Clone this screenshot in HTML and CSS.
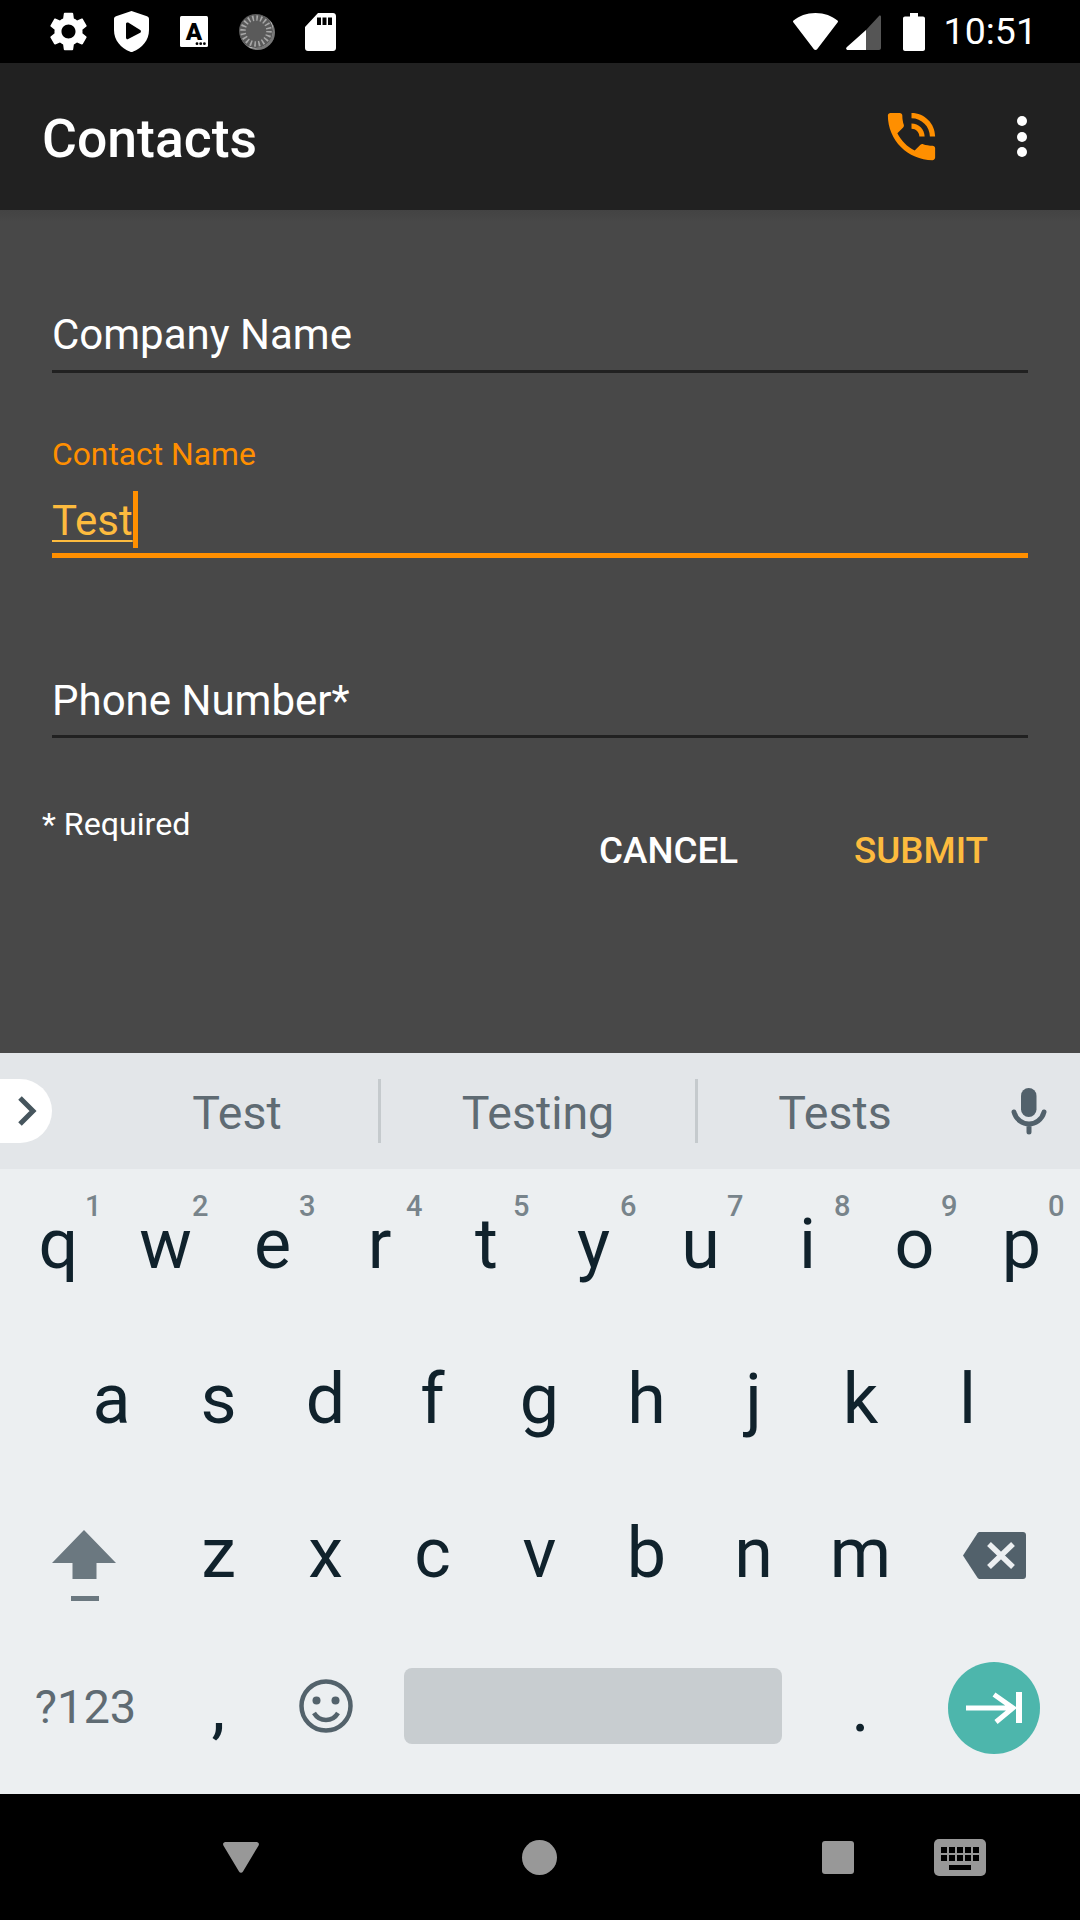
FILE: index.html
```html
<!DOCTYPE html>
<html lang="en">
<head>
<meta charset="utf-8">
<title>Contacts</title>
<link rel="stylesheet" href="styles.css">
</head>
<body>
<div class="screen">
  <header class="status">
    <div class="status-left">
      <svg class="i-gear" viewBox="2.5 2 19 20"><path fill="#fff" d="M19.14 12.94c.04-.3.06-.61.06-.94 0-.32-.02-.64-.07-.94l2.03-1.58c.18-.14.23-.41.12-.61l-1.92-3.32c-.12-.22-.37-.29-.59-.22l-2.39.96c-.5-.38-1.03-.7-1.62-.94l-.36-2.54c-.04-.24-.24-.41-.48-.41h-3.84c-.24 0-.43.17-.47.41l-.36 2.54c-.59.24-1.13.57-1.62.94l-2.39-.96c-.22-.08-.47 0-.59.22L2.74 8.87c-.12.21-.08.47.12.61l2.03 1.58c-.05.3-.09.63-.09.94s.02.64.07.94l-2.03 1.58c-.18.14-.23.41-.12.61l1.92 3.32c.12.22.37.29.59.22l2.39-.96c.5.38 1.03.7 1.62.94l.36 2.54c.05.24.24.41.48.41h3.84c.24 0 .44-.17.47-.41l.36-2.54c.59-.24 1.13-.56 1.62-.94l2.39.96c.22.08.47 0 .59-.22l1.92-3.32c.12-.22.07-.47-.12-.61l-2.01-1.58zM12 15.6c-1.98 0-3.6-1.62-3.6-3.6s1.62-3.6 3.6-3.6 3.6 1.62 3.6 3.6-1.62 3.6-3.6 3.6z"/></svg>
      <svg class="i-shield" viewBox="0 0 35 41"><path fill="#fff" fill-rule="evenodd" d="M17.5 0 33 5.2c1.2.4 2 1.4 2 2.7V19c0 10-6.800 18.400-16.300 21.800-.8.300-1.600.300-2.400 0C6.800 37.400 0 29 0 19V7.900c0-1.300.8-2.300 2-2.700zM12 12.800v14c0 1.200 1.200 1.900 2.200 1.300l12-6.400c1-.6 1-2 0-2.600l-12-7.500c-1-.6-2.200.1-2.200 1.200z"/></svg>
      <svg class="i-a" viewBox="0 0 28 31"><rect width="28" height="31" rx="1.500" fill="#fff"/><text x="14" y="24" class="i-a-text">A</text><circle cx="17" cy="27.700" r="1.400"/><circle cx="20.700" cy="27.700" r="1.400"/><circle cx="24.400" cy="27.700" r="1.400"/></svg>
      <svg class="i-disc" viewBox="0 0 36 36"><circle cx="18.500" cy="18.500" r="17.500" fill="#777"/><path d="M31 8a17 17 0 0 1-21 24" fill="none" stroke="#f0f0f0" stroke-width="2"/><circle cx="17" cy="17" r="17" fill="#5a5a5a"/><circle cx="17" cy="17" r="13" fill="none" stroke="#a8a8a8" stroke-width="5.500" stroke-dasharray="1.600 2.480"/></svg>
      <svg class="i-sd" viewBox="0 0 31 38"><path fill="#fff" fill-rule="evenodd" d="M13 0h15c1.700 0 3 1.300 3 3v32c0 1.700-1.300 3-3 3H3c-1.700 0-3-1.300-3-3V14zM12 4.500v7.500h4v-7.500zm5.500 0v7.500h4v-7.500zm5.500 0v7.500h4v-7.500z"/></svg>
    </div>
    <div class="status-right">
      <svg class="i-wifi" viewBox="0 0 45 37"><path fill="#fff" d="M22.500 0C13.500 0 6 3 .5 7.500c-.6.5-.6 1.200-.2 1.700l20.600 27c.8 1 2.400 1 3.200 0l20.600-27c.4-.5.4-1.200-.2-1.700C39 3 31.500 0 22.500 0z"/></svg>
      <svg class="i-signal" viewBox="0 0 35 35"><path fill="#555" d="M20 15 33 1c.8-.8 2-.3 2 .8V33c0 1.100-.9 2-2 2H20z"/><path fill="#fff" d="M20 15v20H2c-1.800 0-2.500-1.600-1.300-2.800z"/></svg>
      <svg class="i-battery" viewBox="0 0 22 38"><path fill="#fff" d="M7 0h8v3.500h5c1.100 0 2 .9 2 2V36c0 1.100-.9 2-2 2H2c-1.100 0-2-.9-2-2V5.500c0-1.100.9-2 2-2h5z"/></svg>
      <span class="clock">10:51</span>
    </div>
  </header>

  <div class="appbar">
    <h1 class="title">Contacts</h1>
    <svg class="i-phone" viewBox="0 0 24 24"><path fill="#ff8f00" d="M20 15.500c-1.250 0-2.450-.2-3.570-.57-.35-.11-.74-.03-1.020.24l-2.200 2.200c-2.830-1.440-5.150-3.750-6.590-6.590l2.200-2.210c.28-.26.36-.65.25-1C8.700 6.450 8.500 5.250 8.500 4c0-.55-.45-1-1-1H4c-.55 0-1 .45-1 1 0 9.390 7.610 17 17 17 .55 0 1-.45 1-1v-3.500c0-.55-.45-1-1-1zM19 12h2c0-4.970-4.030-9-9-9v2c3.870 0 7 3.130 7 7zm-4 0h2c0-2.760-2.240-5-5-5v2c1.660 0 3 1.340 3 3z"/></svg>
    <div class="overflow"><i></i><i></i><i></i></div>
  </div>

  <main class="form">
    <div class="field field-company"><div class="field-value">Company Name</div></div>
    <div class="field field-contact">
      <div class="field-label">Contact Name</div>
      <div class="field-value field-typed"><span class="composing">Test</span><span class="cursor"></span></div>
    </div>
    <div class="field field-phone"><div class="field-value">Phone Number*</div></div>
    <div class="form-foot">
      <div class="required">* Required</div>
      <div class="actions">
        <button class="btn">CANCEL</button>
        <button class="btn btn-submit">SUBMIT</button>
      </div>
    </div>
  </main>

  <div class="suggest">
    <div class="pill"><svg class="i-chev" viewBox="0 0 20 32"><path d="M3 3l13 13L3 29" fill="none" stroke="#46555d" stroke-width="5"/></svg></div>
    <div class="sug sug-1">Test</div>
    <div class="sug sug-2">Testing</div>
    <div class="sug sug-3">Tests</div>
    <svg class="i-mic" viewBox="0 0 36 47"><rect x="10" width="15.500" height="29" rx="7.750" fill="#52616b"/><path d="M3 24c2 8 9 12 15 12s13-4 15-12M18 36v8" fill="none" stroke="#52616b" stroke-width="5" stroke-linecap="round"/></svg>
  </div>

  <section class="keyboard">
    <div class="row row-1">
      <div class="key">q<sup class="hint">1</sup></div>
      <div class="key">w<sup class="hint">2</sup></div>
      <div class="key">e<sup class="hint">3</sup></div>
      <div class="key">r<sup class="hint">4</sup></div>
      <div class="key">t<sup class="hint">5</sup></div>
      <div class="key">y<sup class="hint">6</sup></div>
      <div class="key">u<sup class="hint">7</sup></div>
      <div class="key">i<sup class="hint">8</sup></div>
      <div class="key">o<sup class="hint">9</sup></div>
      <div class="key">p<sup class="hint">0</sup></div>
    </div>
    <div class="row row-2">
      <div class="key">a</div><div class="key">s</div><div class="key">d</div><div class="key">f</div><div class="key">g</div><div class="key">h</div><div class="key">j</div><div class="key">k</div><div class="key">l</div>
    </div>
    <div class="row row-3">
      <div class="key-side">
        <svg class="i-shift" viewBox="0 0 64 72"><path fill="#6b7880" d="M32 0 64 33H44.500v16h-24V33H0z"/><rect x="19" y="66" width="28" height="5" fill="#6b7880"/></svg>
      </div>
      <div class="key">z</div><div class="key">x</div><div class="key">c</div><div class="key">v</div><div class="key">b</div><div class="key">n</div><div class="key">m</div>
      <div class="key-side key-back">
        <svg class="i-back" viewBox="0 0 63 47"><path fill="#52616b" d="M17 0h43c1.700 0 3 1.300 3 3v41c0 1.700-1.300 3-3 3H17c-1 0-1.900-.5-2.500-1.300L0 23.500 14.500 1.300C15.100.5 16 0 17 0z"/><path d="M26 12l24 23M50 12 26 35" stroke="#eceff1" stroke-width="5.500" fill="none"/></svg>
      </div>
    </div>
    <div class="row row-4">
      <div class="key-side key-sym">?123</div>
      <div class="key key-comma">,</div>
      <div class="key key-emoji">
        <svg class="i-smile" viewBox="0 0 54 54"><circle cx="27" cy="27" r="24.500" fill="none" stroke="#53626b" stroke-width="4.500"/><circle cx="17.500" cy="21.500" r="4" fill="#53626b"/><circle cx="36.500" cy="21.500" r="4" fill="#53626b"/><path d="M15 34c3 5 7.500 7 12 7s9-2 12-7" fill="none" stroke="#53626b" stroke-width="4.500"/></svg>
      </div>
      <div class="space"></div>
      <div class="key key-period">.</div>
      <div class="enter">
        <svg class="i-enter" viewBox="0 0 56 36"><path d="M0 18h47M28 4.500l19 13.500-17 14" fill="none" stroke="#fff" stroke-width="5"/><rect x="50" y="2" width="6" height="31" fill="#fff"/></svg>
      </div>
    </div>
  </section>

  <nav class="navbar">
    <svg class="i-nav-back" viewBox="0 0 36 31"><path fill="#989898" d="M2.500 0h31c1.900 0 3 1.800 2.100 3.400L20 29.500c-.9 1.600-3.100 1.600-4 0L.4 3.400C-.5 1.800.6 0 2.500 0z"/></svg>
    <div class="nav-home"></div>
    <div class="nav-recent"></div>
    <svg class="i-nav-kb" viewBox="0 0 52 37"><rect width="52" height="37" rx="5" fill="#989898"/><g><rect x="7" y="8" width="6" height="6"/><rect x="15" y="8" width="6" height="6"/><rect x="23" y="8" width="6" height="6"/><rect x="31" y="8" width="6" height="6"/><rect x="39" y="8" width="6" height="6"/><rect x="7" y="16" width="6" height="6"/><rect x="15" y="16" width="6" height="6"/><rect x="23" y="16" width="6" height="6"/><rect x="31" y="16" width="6" height="6"/><rect x="39" y="16" width="6" height="6"/><rect x="15" y="26" width="22" height="5"/></g></svg>
  </nav>
</div>
</body>
</html>
```

FILE: styles.css
```css
* { box-sizing: border-box; }
html, body { margin: 0; padding: 0; }
body { font-family: Roboto, "Noto Sans", sans-serif; background: #000; }
svg { display: block; flex: none; }

.screen { width: 1080px; height: 1920px; display: flex; flex-direction: column; overflow: hidden; }

/* status bar */
.status { height: 63px; background: #000; display: flex; justify-content: space-between; align-items: center; flex: none; }
.status-left { display: flex; align-items: center; padding-left: 50px; }
.i-gear { width: 37px; height: 39px; }
.i-shield { width: 35px; height: 41px; margin-left: 27px; }
.i-a { width: 28px; height: 31px; margin-left: 31px; }
.i-a-text { font: 900 24px Roboto, sans-serif; text-anchor: middle; }
.i-disc { width: 36px; height: 36px; margin-left: 31px; }
.i-sd { width: 31px; height: 38px; margin-left: 30px; }
.status-right { display: flex; align-items: center; padding-right: 43px; }
.i-wifi { width: 45px; height: 37px; }
.i-signal { width: 35px; height: 35px; margin-left: 8px; margin-top: 2px; }
.i-battery { width: 22px; height: 38px; margin-left: 22px; }
.clock { font-size: 37.500px; color: #fff; margin-left: 19px; line-height: 63px; }

/* app bar */
.appbar { height: 147px; background: #212121; display: flex; align-items: center; padding-left: 42px; flex: none; }
.title { margin: 0; font-size: 53.500px; font-weight: 500; color: #fff; flex: 1; padding-top: 4px; }
.i-phone { width: 63px; height: 63px; }
.overflow { width: 10px; margin: 0 53px 0 74px; display: flex; flex-direction: column; gap: 5.500px; }
.overflow i { display: block; width: 10px; height: 10px; border-radius: 50%; background: #fff; }

/* form */
.form { height: 843px; flex: none; padding: 100px 52px 0; background: linear-gradient(#434343, #484848 12px); }
.field { border-bottom: 3px solid #212121; }
.field-value { font-size: 42px; line-height: 50px; color: #fff; }
.field-company { padding-bottom: 10px; }
.field-contact { margin-top: 61px; border-bottom: 5px solid #ff8f00; padding-bottom: 7px; }
.field-label { font-size: 31.800px; line-height: 40px; color: #ff8f00; margin-bottom: 22px; }
.field-typed { display: flex; height: 50px; color: #fdbb3e; }
.composing { text-decoration: underline; text-decoration-thickness: 2px; text-underline-offset: 5px; text-decoration-skip-ink: none; }
.cursor { width: 5px; height: 57px; margin-top: -5px; background: #ff8f00; }
.field-phone { margin-top: 118px; padding-bottom: 9px; }
.form-foot { display: flex; justify-content: space-between; margin: 66px 0 0 -10px; }
.required { font-size: 32.200px; line-height: 40px; color: #fff; }
.actions { display: flex; padding-top: 22px; margin-right: 40px; }
.btn { border: 0; padding: 0; background: none; font: 500 36.750px/50px Roboto, sans-serif; color: #fff; }
.btn-submit { color: #fdbb3e; margin-left: 116px; }

/* suggestion strip */
.suggest { height: 116px; flex: none; background: #e3e6e9; display: flex; align-items: center; }
.pill { width: 52px; height: 64px; background: #fff; border-radius: 0 32px 32px 0; display: flex; align-items: center; padding-left: 17px; }
.i-chev { width: 20px; height: 32px; }
.sug { font-size: 46.500px; color: #5f6b73; text-align: center; height: 64px; line-height: 68px; }
.sug-1 { width: 329px; border-right: 3px solid #c5cacd; padding-left: 44px; }
.sug-2 { width: 317px; border-right: 3px solid #c5cacd; }
.sug-3 { width: 274px; }
.i-mic { width: 36px; height: 47px; margin-left: 39px; }

/* keyboard */
.keyboard { height: 625px; flex: none; background: #eceff1; padding-top: 2px; }
.row { height: 154.500px; display: flex; }
.row-1 { padding-left: 5px; }
.row-2 { padding-left: 58px; }
.key { width: 107px; position: relative; text-align: center; font-size: 70px; line-height: 146px; color: #10222c; }
.hint { position: absolute; top: 21px; right: 10.500px; font-size: 29px; line-height: 28px; font-weight: 500; color: #78848b; }
.key-side { width: 165px; display: flex; align-items: center; justify-content: center; }
.i-shift { width: 64px; height: 72px; margin-top: 18px; margin-left: 3px; }
.i-back { width: 63px; height: 47px; margin-left: -4px; margin-top: -4px; }
.row-4 { align-items: flex-start; }
.key-sym { height: 154px; font-size: 47px; color: #5f6b73; margin-top: -5px; padding-left: 6px; }
.key-comma, .key-period { line-height: 144px; }
.key-emoji { height: 154px; display: flex; align-items: center; justify-content: center; margin-top: -6px; }
.i-smile { width: 54px; height: 54px; }
.space { width: 378px; height: 76px; margin: 33px 0 0 25px; background: #c8cdd0; border-radius: 8px; }
.key-period { margin-left: 25px; }
.enter { width: 92px; height: 92px; margin: 27px 0 0 34px; border-radius: 50%; background: #4db6ac; display: flex; align-items: center; justify-content: center; }
.i-enter { width: 56px; height: 36px; }

/* nav bar */
.navbar { height: 126px; flex: none; background: #000; display: flex; align-items: center; padding-left: 223px; }
.i-nav-back { width: 36px; height: 31px; margin-top: 1px; }
.nav-home { width: 35px; height: 35px; border-radius: 50%; background: #989898; margin-left: 263px; }
.nav-recent { width: 32px; height: 33px; border-radius: 3px; background: #989898; margin-left: 265px; }
.i-nav-kb { width: 52px; height: 37px; margin-left: 80px; }
```
